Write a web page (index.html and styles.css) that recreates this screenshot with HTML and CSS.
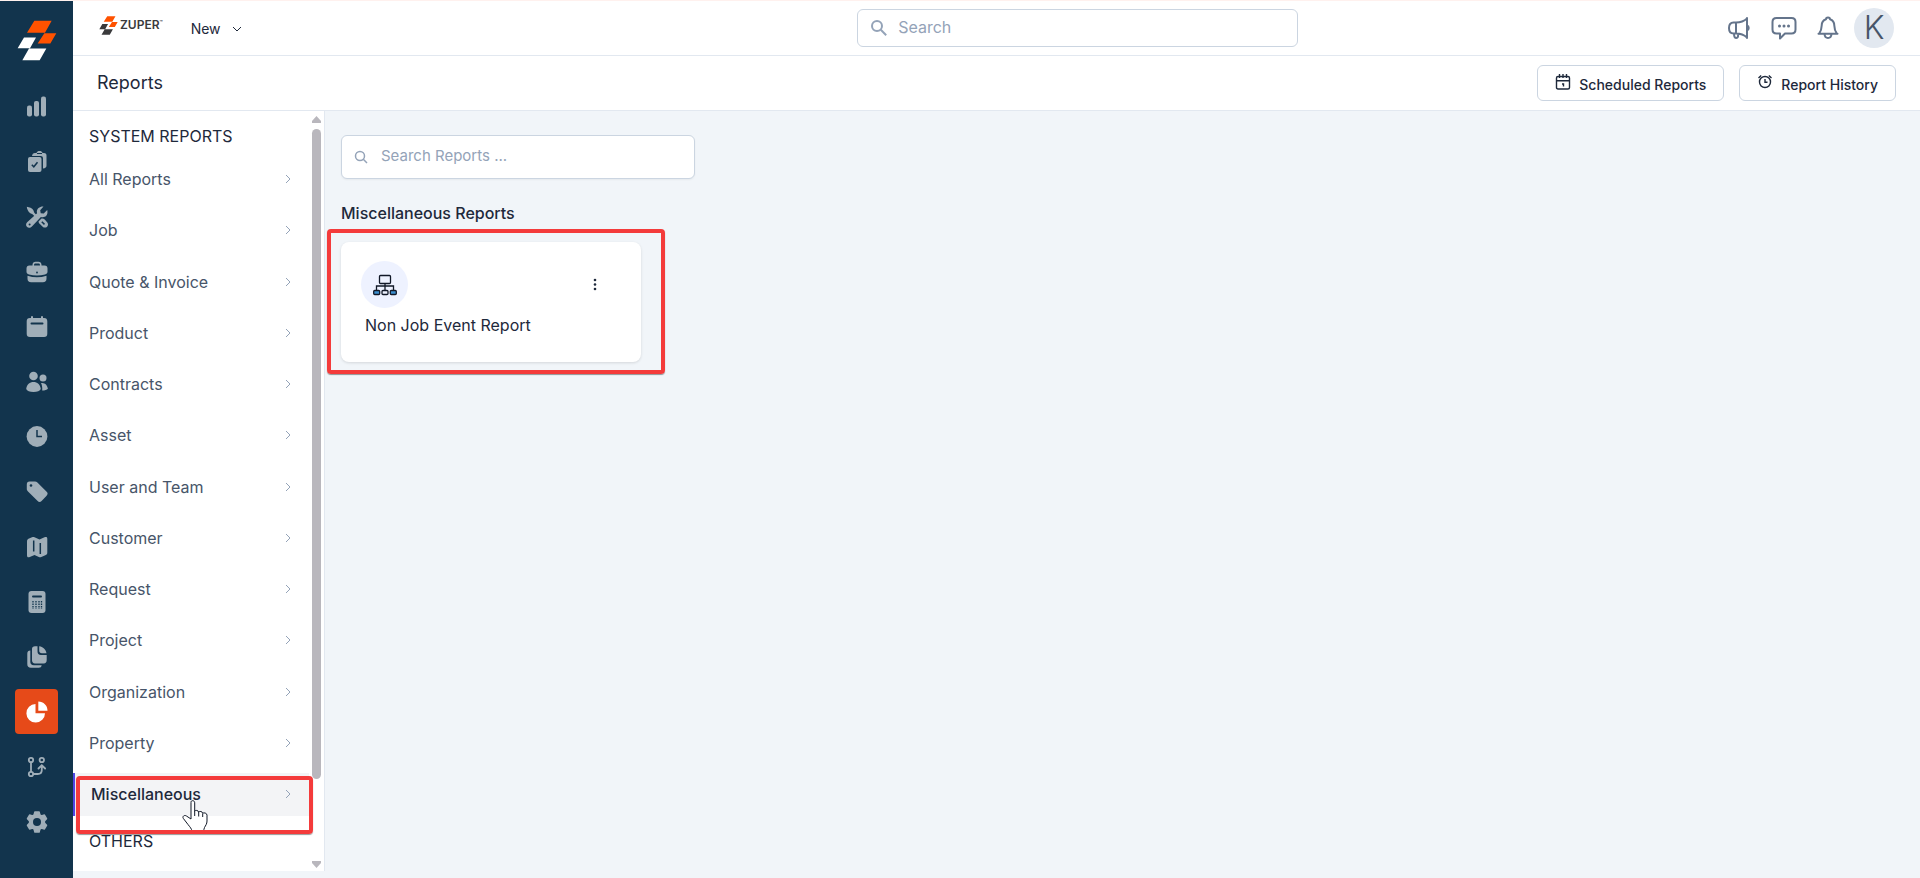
FILE: index.html
```html
<!DOCTYPE html>
<html lang="en">
  <head>
    <meta charset="UTF-8" />
    <meta name="viewport" content="width=device-width, initial-scale=1.0" />
    <title>Reports - Zuper</title>
    <link rel="stylesheet" href="styles.css">
  </head>
  <body>
    <!-- shapes used more than once -->
    <svg class="defs" aria-hidden="true">
      <symbol id="right" viewBox="0 0 10 10"><path d="M3 1l4 4-4 4" /></symbol>
      <symbol id="mark" viewBox="50 60 120 122">
        <path class="mark-top" d="M102 62h52l-20 36H80zM132 99h36l-18 31h-38z" />
        <path class="mark-bottom" d="M71 112h36l-18 32H52zM86 145h52l-20 35H66z" />
      </symbol>
    </svg>

    <nav class="rail" aria-label="Main">
      <a class="rail-logo" href="#" aria-label="Home"><svg width="40" height="41"><use href="#mark" /></svg></a>
      <a class="rail-link" href="#" aria-label="Dashboard">
        <svg viewBox="0 0 22 22"><rect x="1" y="9.500" width="5" height="11" rx="2" /><rect x="8" y="5" width="5" height="15.500" rx="2" /><rect x="15" y=".5" width="5" height="20" rx="2" /></svg>
      </a>
      <a class="rail-link" href="#" aria-label="Tasks">
        <svg viewBox="0 0 22 22"><path d="M6 5c.3-2 1.300-3 3-3h1.500C11 .5 12 0 13.500 0S16 .5 16.500 2H18c1.800 0 2.500 1 2.500 2.500v10c0 1.800-1 2.800-3.500 3v-10C17 5.800 16.200 5 14.500 5zM11 2v1h5V2z" fill-rule="evenodd" /><rect x="2" y="6" width="13.500" height="15" rx="2" /><path class="cut" d="M5.800 13.800l2 2 3.700-4.500" /></svg>
      </a>
      <a class="rail-link" href="#" aria-label="Jobs">
        <svg viewBox="0 0 22 22"><path d="M.8.8c2.500.2 5.500 1.700 6.400 3.200.7 1.200.6 2 1.300 2.900l2 2-1.700 1.600-2-2C5.900 7.800 5 8 4 7.100 2.500 6 .8 3 .8.800z" /><path d="M17.500.5l-3.300 3.800.5 2.900 3 .4 3.500-3.500c.8 3.200-.2 5.800-2.500 6.700-1.400.6-2.800.4-3.800.1l-9 9.500c-1.500 1.700-3.700 1.700-5 .4s-1.100-3.400.5-4.700l9.700-8.900C9.900 3.800 13 .2 17.500.5z" /><circle class="hole" cx="3.600" cy="18.400" r="1" /><path d="M12.500 15.500l3-3c1.400-.3 2.300.2 3.200 1.100l2.200 2.300c1.500 1.500 1.400 3.500.2 4.800-1.300 1.200-3.200 1.200-4.700-.3l-2.500-2.400c-.9-.8-1.300-1.500-1.400-2.500z" /><path class="cut" d="M15.800 15.700l2.700 2.700" /></svg>
      </a>
      <a class="rail-link" href="#" aria-label="Quotes">
        <svg viewBox="0 0 22 22"><path d="M6.500 4.500V3.700C6.500 1.800 7.800.8 9.500.8h3c1.700 0 3 1 3 2.900v.8h3c2 0 3 1.300 3 3v3.300c0 1.700-1 2.200-2.500 2.600-5.300 1.300-10.700 1.300-16 0-1.500-.4-2.500-.9-2.500-2.600V7.500c0-1.700 1-3 3-3zM8 4.500h6V4c0-1-.6-1.600-1.500-1.600h-3C8.600 2.400 8 3 8 4zM1.500 14.700c6.300 2 12.700 2 19 0v2.800c0 2.500-1.200 3.700-3.700 3.700H5.200c-2.500 0-3.700-1.200-3.700-3.700z" fill-rule="evenodd" /><circle class="hole" cx="11" cy="11.500" r=".9" /></svg>
      </a>
      <a class="rail-link" href="#" aria-label="Calendar">
        <svg viewBox="0 0 22 22"><path d="M5 2V1a1 1 0 0 1 2 0v1h8V1a1 1 0 0 1 2 0v1h1c2.300 0 3.300 1.200 3.300 3.300v12.400c0 2.300-1 3.300-3.300 3.300H4C1.700 21 .7 20 .7 17.700V5.300C.7 3.200 1.700 2 4 2z" /><path class="cut wide" d="M5.500 7.500h11" /></svg>
      </a>
      <a class="rail-link" href="#" aria-label="Customers">
        <svg viewBox="0 0 22 22"><circle cx="7.500" cy="5" r="4.300" /><circle cx="17" cy="7" r="3.500" /><path d="M.2 18c.5-4.500 3.600-7 7.300-7s6.800 2.500 7.300 7c-.8 1.800-3.500 3-7.300 3S1 19.800.2 18zM15 12c4-.8 6.500 2.500 6.900 5.700-1 1.100-3 1.700-5.700 1.800.3-3-.2-5.500-1.200-7.500z" /></svg>
      </a>
      <a class="rail-link" href="#" aria-label="Timesheets">
        <svg viewBox="0 0 22 22"><circle cx="11" cy="10.500" r="10.400" /><path class="cut" d="M11 4v6.500h5" /></svg>
      </a>
      <a class="rail-link" href="#" aria-label="Products">
        <svg viewBox="0 0 22 22"><path d="M3.500.500H9c1 0 1.700.3 2.400 1l9 9c1.600 1.600 1.600 2.600.2 4.200l-5 5.200c-1.500 1.500-2.600 1.400-4.200-.2L2 10.500C1.200 9.700.8 9.200.8 8.100V3.500C.8 1.500 1.700.5 3.500.500z" /><circle class="hole" cx="5" cy="4.500" r="1.300" /></svg>
      </a>
      <a class="rail-link" href="#" aria-label="Map">
        <svg viewBox="0 0 22 22"><path d="M1 5.500C1 4 1.500 3 3 2.500l3-1.200c1-.4 1.500-.4 2.500 0L13.500 3.500l5-2.200C20.300.6 21.300 1 21.300 3v13.500c0 1.500-.5 2.200-2 2.800l-4 1.600c-1 .4-1.500.4-2.500 0L8.500 19l-4.700 2c-1.800.7-2.800.2-2.800-1.700z" /><path class="cut" d="M7.700 4.500v11M14.300 7v11" /></svg>
      </a>
      <a class="rail-link" href="#" aria-label="Estimates">
        <svg viewBox="0 0 22 22"><rect x="2.500" width="17" height="22" rx="3" /><path class="cut wide" d="M7 5.500h8" /><path class="cut keys" d="M7 10v8M10 10v8M13 10v8M15.500 10v8" /></svg>
      </a>
      <a class="rail-link" href="#" aria-label="Documents">
        <svg viewBox="0 0 22 22"><path d="M4.300 4.500v11.300c0 2.300 1.200 3.400 3.500 3.400h7.900c-.2 1.700-1.200 2.500-3 2.500H5c-2.500 0-3.700-1.200-3.700-3.700V7.500c0-2 1-3 3-3zM6 3C6 1.200 7.200.2 9 .2h2.500v5c0 2.500 1.200 3.800 3.500 3.800h5.700v5c0 2.300-1 3.500-3 3.500H9c-2 0-3-1.200-3-3.200zM13.200.3c3.800.6 6.600 3 7.300 6.900H16c-1.900 0-2.800-.9-2.800-2.700z" /></svg>
      </a>
      <a class="rail-link active" href="#" aria-label="Reports">
        <svg viewBox="0 0 22 22"><path d="M9.500 3v9.300H19A9.300 9.300 0 1 1 9.500 3z" /><path d="M12.300.5C17.500.5 21.500 4.500 21.500 9.800h-9.200z" /></svg>
      </a>
      <a class="rail-link" href="#" aria-label="Workflows">
        <svg viewBox="0 0 22 22"><path class="line" d="M5 6.500v9M7.500 18h4.300c2.700 0 4-1.300 4-4V9.500M12.500 12.500l3.300-3.300 3.300 3.300" /><circle class="line" cx="5" cy="4" r="2.200" /><circle class="line" cx="5" cy="18" r="2.200" /><circle class="line" cx="15.800" cy="4" r="2.200" /></svg>
      </a>
      <a class="rail-link" href="#" aria-label="Settings">
        <svg viewBox="0 0 22 22"><path d="M8.900 1h4.200l.8 3 1.500.9 3-.9 2.100 3.700-2.100 2.200v2.200l2.100 2.200-2.100 3.700-3-.9-1.500.9-.8 3H8.900l-.8-3-1.500-.9-3 .9-2.100-3.700 2.100-2.200V9.900L1.500 7.700 3.600 4l3 .9L8.100 4z" class="gear" /><circle class="hole" cx="11" cy="11" r="4" /></svg>
      </a>
    </nav>

    <div class="page">
      <header class="topbar">
        <div class="topbar-left">
          <a class="brand" href="#"><svg width="19" height="21"><use href="#mark" /></svg><span>ZUPER<sup>™</sup></span></a>
          <button class="new-btn" type="button">New <svg width="10" height="10" viewBox="0 0 10 10"><path d="M1 3l4 4 4-4" /></svg></button>
        </div>
        <label class="search">
          <svg width="18" height="18" viewBox="0 0 18 18"><circle cx="7" cy="7" r="5" /><path d="M10.800 10.800l5.400 5.400" /></svg>
          <input type="text" placeholder="Search" aria-label="Search">
        </label>
        <div class="topbar-right">
          <button class="icon-btn" type="button" aria-label="Announcements">
            <svg width="24" height="24" viewBox="0 0 24 24"><path d="M9 6.500c4.500 0 8-1.200 11-4v19c-3-2.800-6.500-4-11-4H6.500C3.500 17.500 2 15 2 12s1.500-5.500 4.500-5.500zM9 6.500v11M7 17.500c0 3 .7 4.500 2.300 4.500 1.700 0 2-1.500 1.700-4M20 9.500c2.300.8 2.300 4.200 0 5M20 2v20" /></svg>
          </button>
          <button class="icon-btn" type="button" aria-label="Messages">
            <svg width="26" height="24" viewBox="0 0 26 24"><path d="M5.500 2h15c2.500 0 4 1.500 4 4v7.500c0 2.500-1.500 4-4 4H14L9 22.500v-5H5.500c-2.500 0-4-1.500-4-4V6c0-2.500 1.500-4 4-4z" /><path class="dots" d="M8.500 10h.01M13 10h.01M17.500 10h.01" /></svg>
          </button>
          <button class="icon-btn" type="button" aria-label="Notifications">
            <svg width="22" height="24" viewBox="0 0 22 24"><path d="M9 3.200C9 2 10 1.500 11 1.500s2 .5 2 1.700c3 1 4.300 3.500 4.300 6.300 0 3.500.7 5.500 2.700 8.300H2c2-2.800 2.700-4.800 2.700-8.300C4.700 6.700 6 4.200 9 3.200zM1.500 17.800h19M7.500 18c.2 2.800 1.600 4 3.500 4s3.300-1.200 3.500-4" /></svg>
          </button>
          <button class="avatar" type="button" aria-label="Account">K</button>
        </div>
      </header>

      <div class="titlebar">
        <h1>Reports</h1>
        <div class="actions">
          <button class="outline-btn" type="button">
            <svg width="16" height="18" viewBox="0 0 16 18"><path d="M3 3.500h10c1 0 1.500.5 1.500 1.500v9.500c0 1-.5 1.500-1.500 1.500H3c-1 0-1.500-.5-1.500-1.500V5c0-1 .5-1.500 1.500-1.500zM1.500 7.700h13M4.500 1v4M8 1v4M11.500 1v4M7 11h1.500v2.500" /></svg>
            Scheduled Reports
          </button>
          <button class="outline-btn" type="button">
            <svg width="16" height="18" viewBox="0 0 16 18"><circle cx="8" cy="9" r="5.500" /><path d="M8 6v3.300h2.500M1.500 5L4.200 2.500M14.500 5l-2.700-2.500" /></svg>
            Report History
          </button>
        </div>
      </div>

      <div class="content">
        <aside class="sidebar">
          <div class="menu">
            <h2>SYSTEM REPORTS</h2>
            <ul class="menu-list">
              <li><a href="#">All Reports <svg><use href="#right" /></svg></a></li>
              <li><a href="#">Job <svg><use href="#right" /></svg></a></li>
              <li><a href="#">Quote &amp; Invoice <svg><use href="#right" /></svg></a></li>
              <li><a href="#">Product <svg><use href="#right" /></svg></a></li>
              <li><a href="#">Contracts <svg><use href="#right" /></svg></a></li>
              <li><a href="#">Asset <svg><use href="#right" /></svg></a></li>
              <li><a href="#">User and Team <svg><use href="#right" /></svg></a></li>
              <li><a href="#">Customer <svg><use href="#right" /></svg></a></li>
              <li><a href="#">Request <svg><use href="#right" /></svg></a></li>
              <li><a href="#">Project <svg><use href="#right" /></svg></a></li>
              <li><a href="#">Organization <svg><use href="#right" /></svg></a></li>
              <li><a href="#">Property <svg><use href="#right" /></svg></a></li>
              <li class="selected">
                <a href="#">Miscellaneous <svg><use href="#right" /></svg></a>
                <svg class="pointer" viewBox="0 0 26 32"><path d="M9 2.500C9 1 9.700.7 10.700.7s2 .6 2 2.100v8.400c.3-1.300 3.800-1 4 .9.600-1.200 3.900-.8 4 1.200 1-1 4.300-.3 4.300 1.900V21c0 3-1.500 4.500-2.500 6.500-.6 1.500-.8 2.500-.8 4H10c-.3-3-2-4.300-4-7L1.300 18.400c-1.300-2 1.200-3.900 3.300-2.300L9 19zM12.700 11v5M16.700 12v4.500M20.700 13.500V17" /></svg>
                <span class="highlight"></span>
              </li>
            </ul>
            <h2>OTHERS</h2>
          </div>
          <div class="scrollbar" aria-hidden="true">
            <svg viewBox="0 0 9 8"><path d="M4.500 0L9 5v2H0V5z" /></svg>
            <div class="thumb"></div>
            <svg viewBox="0 0 9 8"><path d="M4.500 8L9 3V1H0v2z" /></svg>
          </div>
        </aside>

        <main class="main">
          <label class="search report-search">
            <svg width="14" height="14" viewBox="0 0 14 14"><circle cx="6" cy="6" r="4.500" /><path d="M9.300 9.300l3.700 3.700" /></svg>
            <input type="text" placeholder="Search Reports ..." aria-label="Search Reports">
          </label>
          <h2>Miscellaneous Reports</h2>
          <div class="card">
            <div class="card-top">
              <span class="card-icon">
                <svg width="24" height="22" viewBox="0 0 24 22">
                  <rect x="6.500" y="1.500" width="11" height="8" rx="1" />
                  <path d="M12 9.500V16M3.500 16v-4h17v4" />
                  <rect class="blue" x=".7" y="16.500" width="6" height="4" rx="1" />
                  <rect x="9" y="16.500" width="6" height="4" rx="1" />
                  <rect class="blue" x="17.300" y="16.500" width="6" height="4" rx="1" />
                </svg>
              </span>
              <button class="more-btn" type="button" aria-label="More options">
                <svg width="4" height="14" viewBox="0 0 4 14"><circle cx="2" cy="2" r="1.300" /><circle cx="2" cy="6.500" r="1.300" /><circle cx="2" cy="11" r="1.300" /></svg>
              </button>
            </div>
            <a class="card-title" href="#">Non Job Event Report</a>
            <span class="highlight"></span>
          </div>
        </main>
      </div>
    </div>
  </body>
</html>
```
FILE: styles.css
```css
* {
  box-sizing: border-box;
}
:root {
  --navy: #12344d;
  --orange: #ff5200;
  --line: #e2e8f0;
  --border: #cbd5e1;
  --ink: #1e293b;
  --muted: #475569;
  --hint: #94a3b8;
  --red: #f43b3b;
}
body {
  margin: 0;
  height: 100vh;
  display: flex;
  border-top: 1px solid #fff1ee;
  background-color: #f1f5f9;
  color: var(--ink);
  font-family: Inter, "Liberation Sans", sans-serif;
  font-size: 16px;
  line-height: 24px;
}
a {
  color: inherit;
  text-decoration: none;
}
button,
input {
  font: inherit;
  color: inherit;
}
button {
  padding: 0;
  border: none;
  background: none;
  cursor: pointer;
}
svg {
  flex: none;
  fill: none;
  stroke: currentColor;
}
h1,
h2 {
  margin: 0;
  font-size: 16px;
  font-weight: 500;
}
.defs {
  position: absolute;
  width: 0;
  height: 0;
}

/* left icon rail */
.rail {
  width: 73px;
  flex: none;
  display: flex;
  flex-direction: column;
  align-items: center;
  gap: 10px;
  padding-top: 19px;
  background-color: var(--navy);
  color: #a0aeb8;
}
.rail-logo {
  height: 54px;
  color: white;
}
.mark-top {
  fill: var(--orange);
  stroke: none;
}
.mark-bottom {
  fill: currentColor;
  stroke: none;
}
.rail-link {
  width: 43px;
  height: 45px;
  display: flex;
  justify-content: center;
  align-items: center;
  border-radius: 4px;
}
.rail-link svg {
  width: 22px;
  height: 22px;
  fill: currentColor;
  stroke: none;
}
.rail-link.active {
  background-color: #e64a19;
  color: white;
}
.rail-link .cut {
  fill: none;
  stroke: var(--navy);
  stroke-width: 1.5;
}
.rail-link .wide {
  stroke-width: 2;
  stroke-linecap: round;
}
.rail-link .keys {
  stroke-dasharray: 1.5 1;
  stroke-width: 1.3;
}
.rail-link .hole {
  fill: var(--navy);
}
.rail-link .line {
  fill: none;
  stroke: currentColor;
  stroke-width: 1.8;
  stroke-linecap: round;
}
.rail-link .gear {
  stroke: currentColor;
  stroke-width: 1.5;
  stroke-linejoin: round;
}

.page {
  flex: 1;
  min-width: 0;
  display: flex;
  flex-direction: column;
}

/* top bar */
.topbar {
  height: 55px;
  flex: none;
  display: grid;
  grid-template-columns: 14fr 441px 11fr; /* search sits a bit right of center */
  align-items: center;
  padding: 0 26px;
  border-bottom: 1px solid var(--line);
  background-color: white;
}
.topbar-left,
.topbar-right {
  display: flex;
  align-items: center;
}
.brand {
  display: flex;
  align-items: center;
  gap: 2px;
  padding-bottom: 6px;
  color: #3a3a3c;
  font-size: 12px;
  font-weight: 600;
}
.brand sup {
  font-size: 5px;
  line-height: 0;
}
.new-btn {
  display: flex;
  align-items: center;
  gap: 11px;
  margin-left: 28px;
  padding-top: 2px;
  font-size: 14px;
}
.search {
  height: 38px;
  display: flex;
  align-items: center;
  gap: 10px;
  padding: 0 12px;
  border: 1px solid var(--border);
  border-radius: 6px;
  background-color: white;
  color: var(--hint);
}
.search svg {
  stroke-width: 2;
}
.search input {
  flex: 1;
  min-width: 0;
  padding: 0 0 2px;
  border: none;
  outline: none;
  background: none;
  color: var(--ink);
}
.search input::placeholder {
  color: var(--hint);
  opacity: 1;
}
.topbar-right {
  justify-content: flex-end;
  gap: 20px;
}
.icon-btn {
  display: flex;
  color: #64748b;
}
.icon-btn svg {
  stroke-width: 2;
  stroke-linejoin: round;
  stroke-linecap: round;
}
.icon-btn .dots {
  stroke-width: 3;
}
.avatar {
  width: 40px;
  height: 40px;
  margin-left: -5px;
  border-radius: 50%;
  background-color: var(--line);
  color: var(--muted);
  font-size: 32px;
  font-weight: 300;
  line-height: 40px;
}

/* page title row */
.titlebar {
  height: 55px;
  flex: none;
  display: flex;
  justify-content: space-between;
  align-items: center;
  padding: 0 24px;
  border-bottom: 1px solid var(--line);
  background-color: white;
}
.titlebar h1 {
  font-size: 18px;
  font-weight: 400;
}
.actions {
  display: flex;
  gap: 15px;
}
.outline-btn {
  height: 36px;
  display: flex;
  align-items: center;
  gap: 8px;
  padding: 3px 17px 0;
  border: 1px solid var(--border);
  border-radius: 6px;
  background-color: white;
  font-size: 14px;
  font-weight: 500;
}
.outline-btn svg {
  margin-bottom: 6px;
  stroke-width: 1.4;
}

.content {
  flex: 1;
  min-height: 0;
  display: flex;
}

/* report groups */
.sidebar {
  width: 252px;
  flex: none;
  display: flex;
  justify-content: space-between;
  margin-bottom: 7px;
  padding-right: 3px;
  border-right: 1px solid var(--line);
  background-color: white;
}
.menu {
  width: 236px;
  display: flex;
  flex-direction: column;
  padding: 13px 0 18px;
}
.menu h2 {
  padding-left: 16px;
  font-weight: 400;
}
.menu-list {
  flex: 1;
  display: flex;
  flex-direction: column;
  justify-content: space-between;
  margin: 10px 0 13px;
  padding: 0;
  list-style: none;
}
.menu-list li {
  position: relative;
}
.menu-list a {
  height: 43px;
  display: flex;
  justify-content: space-between;
  align-items: center;
  padding: 0 16px 1px;
  color: var(--muted);
}
.menu-list a svg {
  width: 10px;
  height: 10px;
  color: var(--hint);
}
.menu-list .selected a {
  border-left: 2px solid #4f46e5;
  background-color: #f3f4f6;
  color: var(--ink);
  font-weight: 500;
}
.pointer {
  width: 26px;
  height: 32px;
  position: absolute;
  top: 27px;
  left: 109px;
  fill: white;
  stroke: #111827;
}
.highlight {
  position: absolute;
  border: 4px solid var(--red);
  border-radius: 4px;
  box-shadow: 0 1px 1px rgba(0, 0, 0, 0.4);
  pointer-events: none;
}
.selected .highlight {
  top: 3px;
  right: -4px;
  bottom: -18px;
  left: 3px;
}
.scrollbar {
  width: 9px;
  display: flex;
  flex-direction: column;
  gap: 5px;
  padding: 5px 0 3px;
}
.scrollbar svg {
  width: 9px;
  height: 8px;
  fill: #b9b7bd;
  stroke: none;
}
.scrollbar .thumb {
  height: 86.5%;
  margin-bottom: auto;
  border-radius: 5px;
  background-color: #b9b7bd;
}

/* report list */
.main {
  flex: 1;
  padding: 24px 16px;
}
.report-search {
  width: 354px;
  height: 44px;
  gap: 13px;
  box-shadow: 0 1px 2px rgba(0, 0, 0, 0.05);
  font-size: 15px;
}
.report-search svg {
  stroke-width: 1.5;
}
.main h2 {
  margin: 22px 0 17px;
}
.card {
  width: 300px;
  height: 120px;
  position: relative;
  padding: 19px 20px;
  border-radius: 8px;
  background-color: white;
  box-shadow: 0 1px 3px rgba(0, 0, 0, 0.12);
}
.card-top {
  display: flex;
  justify-content: space-between;
  align-items: center;
  margin-bottom: 5px;
  padding-right: 24px;
}
.card-icon {
  width: 47px;
  height: 47px;
  display: flex;
  justify-content: center;
  align-items: center;
  border-radius: 50%;
  background-color: #eef2ff;
  color: #111827;
}
.card-icon svg {
  stroke-width: 1.3;
}
.card-icon .blue {
  fill: #3b8fd0;
}
.more-btn {
  display: flex;
}
.more-btn svg {
  fill: currentColor;
  stroke: none;
}
.card-title {
  padding-left: 4px;
}
.card .highlight {
  top: -13px;
  right: -24px;
  bottom: -12px;
  left: -14px;
}
```
